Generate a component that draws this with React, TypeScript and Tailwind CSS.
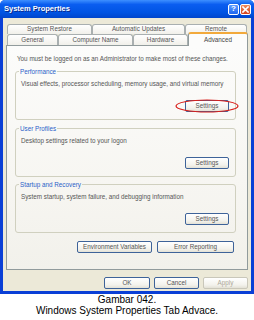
import React from "react";

function Btn({ label, w, focus, dim }: { label: string; w: string; focus?: boolean; dim?: boolean }) {
  const base = "h-[12px] flex items-center justify-center rounded-[2px] bg-[linear-gradient(#FFFFFF,#F3F2EC_70%,#E3E1D6)] text-[6.3px] leading-none whitespace-nowrap";
  const border = dim
    ? "border border-[#C9C7BA] text-[#ACA899]"
    : focus
    ? "border border-[#2F5A96] shadow-[inset_0_0_0_1px_#7DA2E8] text-[#555]"
    : "border border-[#3E6399] text-[#555]";
  return <div className={`${base} ${border} ${w}`}>{label}</div>;
}

function Tab({ label, w, selected }: { label: string; w: string; selected?: boolean }) {
  if (selected) {
    return (
      <div
        className={`${w} relative z-10 -mb-[1px] h-[14px] flex items-start justify-center pt-[2px] rounded-t-[3px] border border-b-0 border-[#919B9C] border-t-[2px] border-t-[#F2A93B] bg-[#FCFCFB] text-[6.3px] leading-[7px] text-[#444]`}
      >
        {label}
      </div>
    );
  }
  return (
    <div
      className={`${w} h-full flex items-center justify-center rounded-t-[3px] border border-b-0 border-[#A9AFB0] bg-[linear-gradient(#FFFFFF,#F1F0EA)] text-[6.3px] leading-none text-[#555]`}
    >
      {label}
    </div>
  );
}

function Group({ title, text, mt }: { title: string; text: string; mt: string }) {
  return (
    <fieldset className={`${mt} ml-[8px] mr-[11px] h-[52px] rounded-[3px] border border-[#D0D0BF] pl-[5px] pr-[6px]`}>
      <legend className="-ml-[2px] px-[1px] text-[6.3px] leading-[7px] text-[#2A5FC8]">{title}</legend>
      <p className="mt-[5px] whitespace-nowrap text-[6.3px] leading-[7px] text-[#555]">{text}</p>
      <div className="mt-[13px] flex justify-end">
        <Btn label="Settings" w="w-[44px]" />
      </div>
    </fieldset>
  );
}

export default function App() {
  return (
    <div className="w-[254px] h-[320px] bg-white font-['Liberation_Sans',Arial,sans-serif]">
      <div className="w-[254px] h-[294px] flex flex-col rounded-t-[5px] bg-[#0A3FD6] px-[3px] pb-[3px]">
        <div className="h-[18px] -mx-[3px] px-[3px] flex items-center rounded-t-[5px] bg-[linear-gradient(#3D8FFF,#0A5DF0_25%,#0054E3_70%,#0046CC)]">
          <span className="ml-[1px] text-[7.5px] font-bold text-white [text-shadow:1px_1px_0_#0A2A8A]">System Properties</span>
          <div className="ml-auto flex gap-[1px]">
            <div className="w-[11px] h-[11px] flex items-center justify-center rounded-[2px] border border-white bg-[linear-gradient(#5C9BFF,#1F67F0)] text-[8px] font-bold leading-none text-white">
              ?
            </div>
            <div className="w-[11px] h-[11px] flex items-center justify-center rounded-[2px] border border-white bg-[linear-gradient(#F08A5C,#D6431E)]">
              <svg width="7" height="7" viewBox="0 0 7 7">
                <path d="M1 1L6 6M6 1L1 6" stroke="white" strokeWidth="1.6" strokeLinecap="square" />
              </svg>
            </div>
          </div>
        </div>

        <div className="flex-1 flex flex-col bg-[#ECE9D8] pt-[6px]">
          <div className="h-[10px] ml-[4px] flex">
            <Tab label="System Restore" w="w-[85px]" />
            <Tab label="Automatic Updates" w="w-[93px]" />
            <Tab label="Remote" w="w-[62px]" />
          </div>
          <div className="h-[11px] ml-[4px] flex items-end">
            <Tab label="General" w="w-[51px]" />
            <Tab label="Computer Name" w="w-[75px]" />
            <Tab label="Hardware" w="w-[55px]" />
            <Tab label="Advanced" w="w-[60px]" selected />
          </div>

          <div className="mx-[3px] h-[225px] flex flex-col border border-[#919B9C] bg-[linear-gradient(#FCFCFB,#F7F6F2_60%,#F2F1EB)]">
            <p className="ml-[10px] mt-[9px] whitespace-nowrap text-[6.3px] leading-[7px] text-[#555]">
              You must be logged on as an Administrator to make most of these changes.
            </p>
            <div className="relative">
              <Group
                mt="mt-[6px]"
                title="Performance"
                text="Visual effects, processor scheduling, memory usage, and virtual memory"
              />
              <svg className="absolute left-[168px] top-[37px]" width="64" height="14" viewBox="0 0 64 14">
                <ellipse cx="32" cy="7" rx="31" ry="6" fill="none" stroke="#D8201C" strokeWidth="1.2" />
              </svg>
            </div>
            <Group mt="mt-[5px]" title="User Profiles" text="Desktop settings related to your logon" />
            <Group
              mt="mt-[4px]"
              title="Startup and Recovery"
              text="System startup, system failure, and debugging information"
            />
            <div className="mt-[8px] mr-[13px] flex justify-end gap-[5px]">
              <Btn label="Environment Variables" w="w-[75px]" />
              <Btn label="Error Reporting" w="w-[77px]" />
            </div>
          </div>

          <div className="mt-[7px] mr-[3px] flex justify-end gap-[4px]">
            <Btn label="OK" w="w-[46px]" />
            <Btn label="Cancel" w="w-[45px]" />
            <Btn label="Apply" w="w-[45px]" dim />
          </div>
        </div>
      </div>

      <div className="pt-[1px] text-center text-[10px] leading-[10.5px] text-black">
        <p>Gambar 042.</p>
        <p>Windows System Properties Tab Advace.</p>
      </div>
    </div>
  );
}
